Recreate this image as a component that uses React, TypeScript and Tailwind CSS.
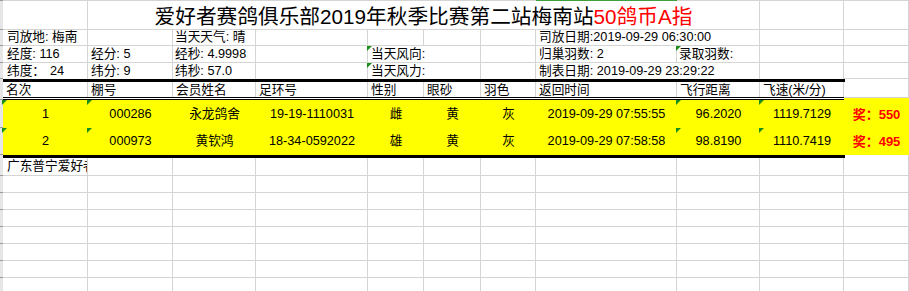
import React from "react";

const FONT = "font-['Liberation_Sans','Noto_Sans_CJK_SC',sans-serif]";

function cx(...a: (string | false | undefined | null)[]) {
  return a.filter(Boolean).join(" ");
}

function Tri() {
  return (
    <div className="absolute left-[-1px] top-0 w-0 h-0 border-t-[5px] border-r-[5px] border-t-[#1a8f1a] border-r-transparent" />
  );
}

function Cell({
  w,
  r = true,
  b = true,
  tri = false,
  className = "",
  children,
}: {
  w: string;
  r?: boolean;
  b?: boolean;
  tri?: boolean;
  className?: string;
  children?: React.ReactNode;
}) {
  return (
    <div
      className={cx(
        "relative shrink-0 h-full flex items-center whitespace-pre",
        w,
        r && "border-r border-[#d4d4d4]",
        b && "border-b border-[#d4d4d4]",
        className
      )}
    >
      {tri && <Tri />}
      {children}
    </div>
  );
}

function Strip({ b = true }: { b?: boolean }) {
  return (
    <div
      className={cx(
        "w-[3px] shrink-0 h-full bg-[#e6e6e6]",
        b && "border-b border-[#9a9a9a]"
      )}
    />
  );
}

const A = "w-[85px]";
const B = "w-[85px]";
const C = "w-[83px]";
const D = "w-[112px]";
const E = "w-[56px]";
const F = "w-[57px]";
const G = "w-[55px]";
const H = "w-[141px]";
const I = "w-[83px]";
const J = "w-[84px]";
const K = "w-[65px]";
const EF = "w-[113px]";
const HI = "w-[224px]";

function Separator() {
  return (
    <div className="flex h-[3px]">
      <Strip b={false} />
      <div className="w-[842px] h-full bg-black" />
      <div className="w-[64px] h-full border-r border-[#d4d4d4]" />
    </div>
  );
}

const rows = [
  {
    h: "h-[28px]",
    v: [
      "1",
      "000286",
      "永龙鸽舍",
      "19-19-1110031",
      "雌",
      "黄",
      "灰",
      "2019-09-29 07:55:55",
      "96.2020",
      "1119.7129",
      "550",
    ],
  },
  {
    h: "h-[27px]",
    v: [
      "2",
      "000973",
      "黄钦鸿",
      "18-34-0592022",
      "雄",
      "黄",
      "灰",
      "2019-09-29 07:58:58",
      "98.8190",
      "1110.7419",
      "495",
    ],
  },
];

const dataW = [A, B, C, D, E, F, G, H, I, J];
const triCols = [0, 1, 8, 9];

export default function App() {
  return (
    <div
      className={cx(
        "w-[909px] h-[291px] overflow-hidden bg-white text-black text-[12.7px] leading-none",
        FONT
      )}
    >
      {/* top header edge */}
      <div className="flex h-px">
        <div className="w-[3px] bg-[#9a9a9a]" />
        <div className="w-[533px] bg-[#d4d4d4]" />
        <div className="w-[141px] bg-[#3f9f3f]" />
        <div className="flex-1 bg-[#d4d4d4]" />
      </div>

      {/* title row */}
      <div className="flex h-[29px]">
        <Strip />
        <Cell w={A} />
        <Cell w="w-[672px]" className="justify-center items-end pb-[1px]">
          <span className="text-[20.7px] leading-none">
            爱好者赛鸽俱乐部2019年秋季比赛第二站梅南站
            <span className="text-[#ff0000]">50鸽币A指</span>
          </span>
        </Cell>
        <Cell w={J} />
        <Cell w={K} />
      </div>

      {/* row 2 */}
      <div className="flex h-[16px]">
        <Strip />
        <Cell w={A} className="pl-[4px]">司放地: 梅南</Cell>
        <Cell w={B} />
        <Cell w={C} className="pl-[2px]">当天天气: 晴</Cell>
        <Cell w={D} />
        <Cell w={E} />
        <Cell w={F} />
        <Cell w={G} />
        <Cell w={HI} className="pl-[3px]">司放日期:2019-09-29 06:30:00</Cell>
        <Cell w={J} />
        <Cell w={K} />
      </div>

      {/* row 3 */}
      <div className="flex h-[17px]">
        <Strip />
        <Cell w={A} className="pl-[4px]">经度: 116</Cell>
        <Cell w={B} className="pl-[3px]">经分: 5</Cell>
        <Cell w={C} className="pl-[2px]">经秒: 4.9998</Cell>
        <Cell w={D} />
        <Cell w={EF} tri className="pl-[3px]">当天风向:</Cell>
        <Cell w={G} />
        <Cell w={H} className="pl-[3px]">归巢羽数: 2</Cell>
        <Cell w={I} tri className="pl-[2px]">录取羽数:</Cell>
        <Cell w={J} />
        <Cell w={K} />
      </div>

      {/* row 4 */}
      <div className="flex h-[16px]">
        <Strip />
        <Cell w={A} b={false} className="pl-[4px]">
          纬度：<span className="ml-[5px]">24</span>
        </Cell>
        <Cell w={B} b={false} className="pl-[3px]">纬分: 9</Cell>
        <Cell w={C} b={false} className="pl-[2px]">纬秒: 57.0</Cell>
        <Cell w={D} b={false} />
        <Cell w={EF} b={false} tri className="pl-[3px]">当天风力:</Cell>
        <Cell w={G} b={false} />
        <Cell w={HI} b={false} className="pl-[3px]">制表日期: 2019-09-29 23:29:22</Cell>
        <Cell w={J} b={false} />
        <Cell w={K} />
      </div>

      <Separator />

      {/* header row */}
      <div className="flex h-[18px]">
        <Strip />
        <div className="w-[841px] flex flex-col">
          <div className="flex h-[15px]">
            {[
              [A, "名次"],
              [B, "棚号"],
              [C, "会员姓名"],
              [D, "足环号"],
              [E, "性别"],
              [F, "眼砂"],
              [G, "羽色"],
              [H, "返回时间"],
              [I, "飞行距离"],
              [J, "飞速(米/分)"],
            ].map(([w, t]) => (
              <Cell key={t} w={w} b={false} className="pl-[3px] items-end">
                {t}
              </Cell>
            ))}
          </div>
          <div className="h-[3px] border-y border-black bg-white" />
        </div>
        <div className="w-[65px] flex flex-col">
          <div className="h-[15px] border-r border-[#d4d4d4]" />
          <div className="h-px bg-[#d4d4d4]" />
          <div className="h-[2px] bg-[#ffff00]" />
        </div>
      </div>

      {/* data rows */}
      {rows.map((row, ri) => (
        <div key={ri} className={cx("flex", row.h)}>
          <Strip />
          <div className="flex flex-1 h-full bg-[#ffff00]">
            {dataW.map((w, ci) => (
              <Cell
                key={ci}
                w={w}
                r={false}
                b={false}
                tri={triCols.includes(ci)}
                className="justify-center"
              >
                {row.v[ci]}
              </Cell>
            ))}
            <Cell w={K} r={false} b={false} className="justify-center">
              <span className="font-bold text-[#ff0000] text-[13px]">
                奖：{row.v[10]}
              </span>
            </Cell>
          </div>
        </div>
      ))}

      <Separator />

      {/* footer row */}
      <div className="flex h-[18px]">
        <Strip />
        <Cell w={A} className="pl-[4px] overflow-hidden">
          广东普宁爱好者赛鸽俱乐部
        </Cell>
        <Cell w={B} />
        <Cell w={C} />
        <Cell w={D} />
        <Cell w={E} />
        <Cell w={F} />
        <Cell w={G} />
        <Cell w={H} />
        <Cell w={I} />
        <Cell w={J} />
        <Cell w={K} />
      </div>

      {[0, 1, 2, 3, 4, 5, 6].map((i) => (
        <div key={i} className="flex h-[17px]">
          <Strip />
          {[A, B, C, D, E, F, G, H, I, J, K].map((w, ci) => (
            <Cell key={ci} w={w} />
          ))}
        </div>
      ))}
    </div>
  );
}
